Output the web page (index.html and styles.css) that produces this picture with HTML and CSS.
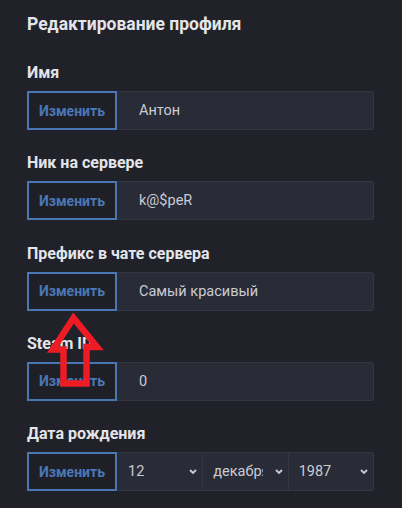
FILE: index.html
```html
<!DOCTYPE html>
<html lang="ru">
<head>
<meta charset="utf-8">
<link rel="stylesheet" href="styles.css">
</head>
<body>
<div class="page">
  <h1 class="title">Редактирование профиля</h1>
  <div class="group">
    <div class="label">Имя</div>
    <div class="row">
      <button class="btn">Изменить</button>
      <div class="field">Антон</div>
    </div>
  </div>
  <div class="group">
    <div class="label">Ник на сервере</div>
    <div class="row">
      <button class="btn">Изменить</button>
      <div class="field">k@$peR</div>
    </div>
  </div>
  <div class="group">
    <div class="label">Префикс в чате сервера</div>
    <div class="row">
      <button class="btn">Изменить</button>
      <div class="field">Самый красивый</div>
    </div>
  </div>
  <div class="group">
    <div class="label">Steam ID</div>
    <div class="row">
      <button class="btn">Изменить</button>
      <div class="field">0</div>
    </div>
  </div>
  <div class="group">
    <div class="label">Дата рождения</div>
    <div class="row">
      <button class="btn">Изменить</button>
      <div class="selects">
        <div class="sel"><span class="val">12</span><svg class="chev" viewBox="0 0 8 5"><path d="M1 1 L4 4 L7 1"/></svg></div>
        <div class="sel"><span class="val clip">декабря</span><svg class="chev" viewBox="0 0 8 5"><path d="M1 1 L4 4 L7 1"/></svg></div>
        <div class="sel"><span class="val">1987</span><svg class="chev" viewBox="0 0 8 5"><path d="M1 1 L4 4 L7 1"/></svg></div>
      </div>
    </div>
  </div>
</div>
<svg class="arrow" width="402" height="508" viewBox="0 0 402 508">
  <polygon points="73.5,318 53,349.5 63.5,349.5 63.5,383.5 86.5,383.5 86.5,347 97,347" fill="none" stroke="#ed1c24" stroke-width="6.5" stroke-linejoin="miter"/>
</svg>
</body>
</html>
```
FILE: styles.css
```css
html, body {
  margin: 0;
  padding: 0;
  background: #212229;
  width: 402px;
  height: 508px;
  overflow: hidden;
  font-family: Roboto, "Noto Sans", sans-serif;
}
.page {
  padding: 14px 28px 0 27px;
  width: 347px;
}
.title {
  margin: 0 0 29px 0;
  font-size: 17.5px;
  line-height: 20px;
  font-weight: 700;
  color: #e4e5ea;
}
.group {
  margin-bottom: 23.25px;
}
.label {
  font-size: 16px;
  line-height: 20px;
  font-weight: 700;
  color: #e4e5ea;
  margin-bottom: 8px;
}
.row {
  display: flex;
  height: 39px;
}
.btn {
  box-sizing: border-box;
  width: 90px;
  height: 39px;
  flex: none;
  margin: 0;
  padding: 0;
  border: 2px solid #4a76b1;
  background: #1f2027;
  color: #4a77b6;
  font-family: Roboto, "Noto Sans", sans-serif;
  font-weight: 700;
  font-size: 14px;
}
.field {
  flex: 1;
  box-sizing: border-box;
  background: #292b36;
  border: 1px solid #343642;
  border-left: none;
  border-radius: 0 3px 3px 0;
  padding-left: 22px;
  display: flex;
  align-items: center;
  color: #c9cbd5;
  font-size: 14.5px;
}
.selects {
  flex: 1;
  display: flex;
  box-sizing: border-box;
  background: #292b36;
  border: 1px solid #343642;
  border-left: none;
  border-radius: 0 3px 3px 0;
}
.sel {
  flex: 1;
  display: flex;
  align-items: center;
  justify-content: space-between;
  padding: 0 5px 0 10px;
  border-left: 1px solid #343642;
  color: #c9cbd5;
  font-size: 14.5px;
}
.sel:first-child {
  border-left: none;
  padding-left: 11px;
}
.val.clip {
  width: 50px;
  overflow: hidden;
  white-space: nowrap;
}
.chev {
  width: 8px;
  height: 5px;
  fill: none;
  stroke: #c9cbd5;
  stroke-width: 1.8;
}
.arrow {
  position: absolute;
  left: 0;
  top: 0;
  pointer-events: none;
}
```
